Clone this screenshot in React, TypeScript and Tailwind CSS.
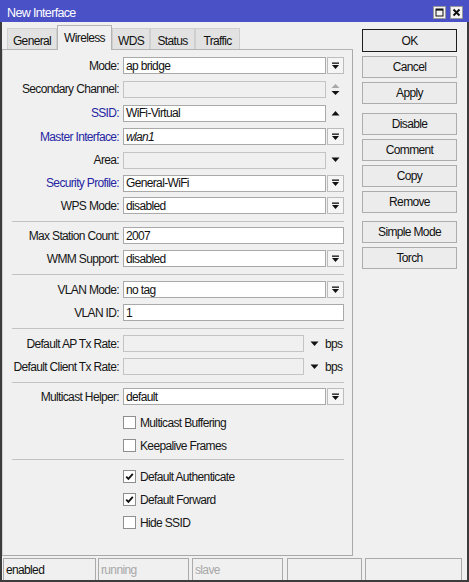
import React from "react";

const FONT = "font-['Liberation_Sans',Arial,sans-serif] text-[12px] tracking-[-0.65px]";

function DropIcon() {
  return (
    <svg width="9" height="8" viewBox="0 0 9 8">
      <rect x="1" y="0.5" width="7" height="1.3" fill="#111" />
      <path d="M1 3 H8 L4.5 7 Z" fill="#111" />
    </svg>
  );
}

function DropBtn() {
  return (
    <div className="ml-[1px] flex h-[17px] w-[17px] shrink-0 items-center justify-center border border-[#bcbcbc] bg-[#f5f5f5]">
      <DropIcon />
    </div>
  );
}

function TriDown({ color = "#111" }: { color?: string }) {
  return (
    <svg width="9" height="6" viewBox="0 0 9 6">
      <path d="M0.5 0.5 H8.5 L4.5 5 Z" fill={color} />
    </svg>
  );
}

function TriUp({ color = "#111" }: { color?: string }) {
  return (
    <svg width="9" height="6" viewBox="0 0 9 6">
      <path d="M0.5 5.5 H8.5 L4.5 1 Z" fill={color} />
    </svg>
  );
}

function Label({ children, blue }: { children: React.ReactNode; blue?: boolean }) {
  return (
    <div className={blue ? "w-[116px] shrink-0 text-right text-[#2525a3]" : "w-[116px] shrink-0 text-right text-[#161616]"}>
      {children}
    </div>
  );
}

function Field({
  value,
  wide,
  disabled,
  italic,
  short,
}: {
  value?: string;
  wide?: boolean;
  disabled?: boolean;
  italic?: boolean;
  short?: boolean;
}) {
  const width = wide ? "w-[221px]" : short ? "w-[181px]" : "w-[203px]";
  const bg = disabled ? "bg-[#f0f0f0] border-[#c4c4c4]" : "bg-white border-[#a9a9a9]";
  return (
    <div className={`${width} ${bg} flex h-[17px] shrink-0 items-center border pl-[2px] text-[#111] ${italic ? "italic" : ""}`}>
      {value}
    </div>
  );
}

function Row({ hClass, children }: { hClass: string; children: React.ReactNode }) {
  return <div className={`flex items-center ${hClass}`}>{children}</div>;
}

function Sep({ mt, mb }: { mt: string; mb: string }) {
  return <div className={`ml-[9px] h-px w-[332px] bg-[#c3c3c3] ${mt} ${mb}`} />;
}

function Check({ checked, label, hClass = "h-[23px]" }: { checked?: boolean; label: string; hClass?: string }) {
  return (
    <div className={`flex items-center pl-[120px] ${hClass}`}>
      <div className="flex h-[13px] w-[13px] items-center justify-center border border-[#8e8e8e] bg-white">
        {checked && (
          <svg width="9" height="9" viewBox="0 0 9 9">
            <path d="M1.2 4.6 L3.4 6.9 L7.8 1.8" stroke="#111" strokeWidth="1.8" fill="none" />
          </svg>
        )}
      </div>
      <span className="ml-[4px] text-[#161616]">{label}</span>
    </div>
  );
}

function Btn({ label, isDefault }: { label: string; isDefault?: boolean }) {
  return (
    <div
      className={
        isDefault
          ? "flex h-[23px] w-[95px] items-center justify-center border border-[#1e1e1e] bg-[#ececec] text-[#111]"
          : "flex h-[22px] w-[95px] items-center justify-center border border-[#adadad] bg-[#ececec] text-[#111]"
      }
    >
      {label}
    </div>
  );
}

function Tab({ label, active, wClass }: { label: string; active?: boolean; wClass: string }) {
  return active ? (
    <div className={`relative z-10 -mb-px flex h-[25px] items-start justify-center border border-b-0 border-[#b4b4b4] bg-[#f0f0f0] pt-[6px] text-[#111] ${wClass}`}>
      {label}
    </div>
  ) : (
    <div className={`flex h-[21px] items-center justify-center border border-b-0 border-[#cfcfcf] bg-[#e2e2e2] pt-[3px] text-[#111] ${wClass}`}>
      {label}
    </div>
  );
}

export default function App() {
  return (
    <div className={`${FONT} flex h-[582px] w-[469px] flex-col bg-[#f0f0f0] leading-none`}>
      {/* title bar */}
      <div className="flex h-[22px] shrink-0 items-center bg-[#4a50c6] pl-[7px] text-white">
        <span className="pt-[4px] text-[12.5px]">New Interface</span>
        <div className="ml-auto mr-[6px] mt-[3px] flex items-center gap-[4px]">
          <div className="flex h-[13px] w-[13px] items-center justify-center border border-[#9a9a9a] bg-[#f4f4f4]">
            <svg width="9" height="9" viewBox="0 0 9 9">
              <rect x="1" y="1" width="7" height="7" fill="none" stroke="#111" strokeWidth="1" />
              <rect x="1" y="1" width="7" height="1.6" fill="#111" />
            </svg>
          </div>
          <div className="flex h-[13px] w-[13px] items-center justify-center border border-[#9a9a9a] bg-[#f4f4f4]">
            <svg width="9" height="9" viewBox="0 0 9 9">
              <path d="M1.5 1.5 L7.5 7.5 M7.5 1.5 L1.5 7.5" stroke="#111" strokeWidth="2" />
            </svg>
          </div>
        </div>
      </div>

      {/* body */}
      <div className="flex flex-1 flex-col border-x-2 border-b-2 border-[#3c3c3c]">
        <div className="flex h-[534px]">
          {/* left column */}
          <div className="flex w-[351px] flex-col">
            {/* tabs */}
            <div className="flex h-[28px] shrink-0 items-end border-b border-[#b4b4b4] pl-[5px]">
              <Tab label="General" wClass="w-[50px]" />
              <Tab label="Wireless" active wClass="w-[55px]" />
              <Tab label="WDS" wClass="w-[38px]" />
              <Tab label="Status" wClass="w-[45px]" />
              <Tab label="Traffic" wClass="w-[45px]" />
            </div>
            {/* panel */}
            <div className="flex flex-1 flex-col border-x border-b border-[#a9a9a9] border-l-[#d0d0d0] pt-[4px]">
              <Row hClass="h-[23px]">
                <Label>Mode:</Label>
                <div className="ml-[4px] flex items-center">
                  <Field value="ap bridge" />
                  <DropBtn />
                </div>
              </Row>
              <Row hClass="h-[24px]">
                <Label>Secondary Channel:</Label>
                <div className="ml-[4px] flex items-center">
                  <Field disabled />
                  <div className="ml-[1px] flex w-[17px] items-center justify-center">
                    <svg width="9" height="13" viewBox="0 0 9 13">
                      <path d="M0.5 5 H8.5 L4.5 1 Z" fill="#a8a8a8" />
                      <path d="M0.5 8 H8.5 L4.5 12 Z" fill="#111" />
                    </svg>
                  </div>
                </div>
              </Row>
              <Row hClass="h-[24px]">
                <Label blue>SSID:</Label>
                <div className="ml-[4px] flex items-center">
                  <Field value="WiFi-Virtual" />
                  <div className="ml-[1px] flex w-[17px] items-center justify-center">
                    <TriUp />
                  </div>
                </div>
              </Row>
              <Row hClass="h-[23px]">
                <Label blue>Master Interface:</Label>
                <div className="ml-[4px] flex items-center">
                  <Field value="wlan1" italic />
                  <DropBtn />
                </div>
              </Row>
              <Row hClass="h-[24px]">
                <Label>Area:</Label>
                <div className="ml-[4px] flex items-center">
                  <Field disabled />
                  <div className="ml-[1px] flex w-[17px] items-center justify-center">
                    <TriDown />
                  </div>
                </div>
              </Row>
              <Row hClass="h-[22px]">
                <Label blue>Security Profile:</Label>
                <div className="ml-[4px] flex items-center">
                  <Field value="General-WiFi" />
                  <DropBtn />
                </div>
              </Row>
              <Row hClass="h-[23px]">
                <Label>WPS Mode:</Label>
                <div className="ml-[4px] flex items-center">
                  <Field value="disabled" />
                  <DropBtn />
                </div>
              </Row>

              <Sep mt="mt-[4px]" mb="mb-[2px]" />

              <Row hClass="h-[23px]">
                <Label>Max Station Count:</Label>
                <div className="ml-[4px] flex items-center">
                  <Field value="2007" wide />
                </div>
              </Row>
              <Row hClass="h-[23px]">
                <Label>WMM Support:</Label>
                <div className="ml-[4px] flex items-center">
                  <Field value="disabled" />
                  <DropBtn />
                </div>
              </Row>

              <Sep mt="mt-[4px]" mb="mb-[3px]" />

              <Row hClass="h-[23px]">
                <Label>VLAN Mode:</Label>
                <div className="ml-[4px] flex items-center">
                  <Field value="no tag" />
                  <DropBtn />
                </div>
              </Row>
              <Row hClass="h-[23px]">
                <Label>VLAN ID:</Label>
                <div className="ml-[4px] flex items-center">
                  <Field value="1" wide />
                </div>
              </Row>

              <Sep mt="mt-[4px]" mb="mb-[3px]" />

              <Row hClass="h-[23px]">
                <Label>Default AP Tx Rate:</Label>
                <div className="ml-[4px] flex items-center">
                  <Field disabled short />
                  <div className="ml-[6px] flex items-center">
                    <TriDown />
                  </div>
                  <span className="ml-[6px] text-[#161616]">bps</span>
                </div>
              </Row>
              <Row hClass="h-[23px]">
                <Label>Default Client Tx Rate:</Label>
                <div className="ml-[4px] flex items-center">
                  <Field disabled short />
                  <div className="ml-[6px] flex items-center">
                    <TriDown />
                  </div>
                  <span className="ml-[6px] text-[#161616]">bps</span>
                </div>
              </Row>

              <Sep mt="mt-[4px]" mb="mb-[2px]" />

              <Row hClass="h-[23px]">
                <Label>Multicast Helper:</Label>
                <div className="ml-[4px] flex items-center">
                  <Field value="default" />
                  <DropBtn />
                </div>
              </Row>
              <div className="h-[3px]" />
              <Check label="Multicast Buffering" />
              <Check label="Keepalive Frames" />

              <Sep mt="mt-[2px]" mb="mb-[5px]" />

              <Check label="Default Authenticate" checked />
              <Check label="Default Forward" checked />
              <Check label="Hide SSID" />
            </div>
          </div>

          {/* right buttons */}
          <div className="ml-[9px] flex w-[95px] flex-col pt-[7px]">
            <Btn label="OK" isDefault />
            <div className="mt-[4px] flex flex-col gap-[4px]">
              <Btn label="Cancel" />
              <Btn label="Apply" />
            </div>
            <div className="mt-[9px] flex flex-col gap-[4px]">
              <Btn label="Disable" />
              <Btn label="Comment" />
              <Btn label="Copy" />
              <Btn label="Remove" />
            </div>
            <div className="mt-[8px] flex flex-col gap-[4px]">
              <Btn label="Simple Mode" />
              <Btn label="Torch" />
            </div>
          </div>
        </div>

        {/* status bar */}
        <div className="mt-[2px] flex flex-1">
          <div className="ml-[1px] flex w-[93px] items-center border border-b-0 border-[#aaaaaa] pl-[2px] text-[#111]">enabled</div>
          <div className="ml-[2px] flex w-[91px] items-center border border-b-0 border-[#aaaaaa] pl-[2px] text-[#a8a8a8]">running</div>
          <div className="ml-[3px] flex w-[91px] items-center border border-b-0 border-[#aaaaaa] pl-[2px] text-[#a8a8a8]">slave</div>
          <div className="ml-[4px] w-[75px] border border-b-0 border-[#aaaaaa]" />
          <div className="ml-[3px] w-[97px] border border-b-0 border-[#aaaaaa]" />
        </div>
      </div>
    </div>
  );
}
